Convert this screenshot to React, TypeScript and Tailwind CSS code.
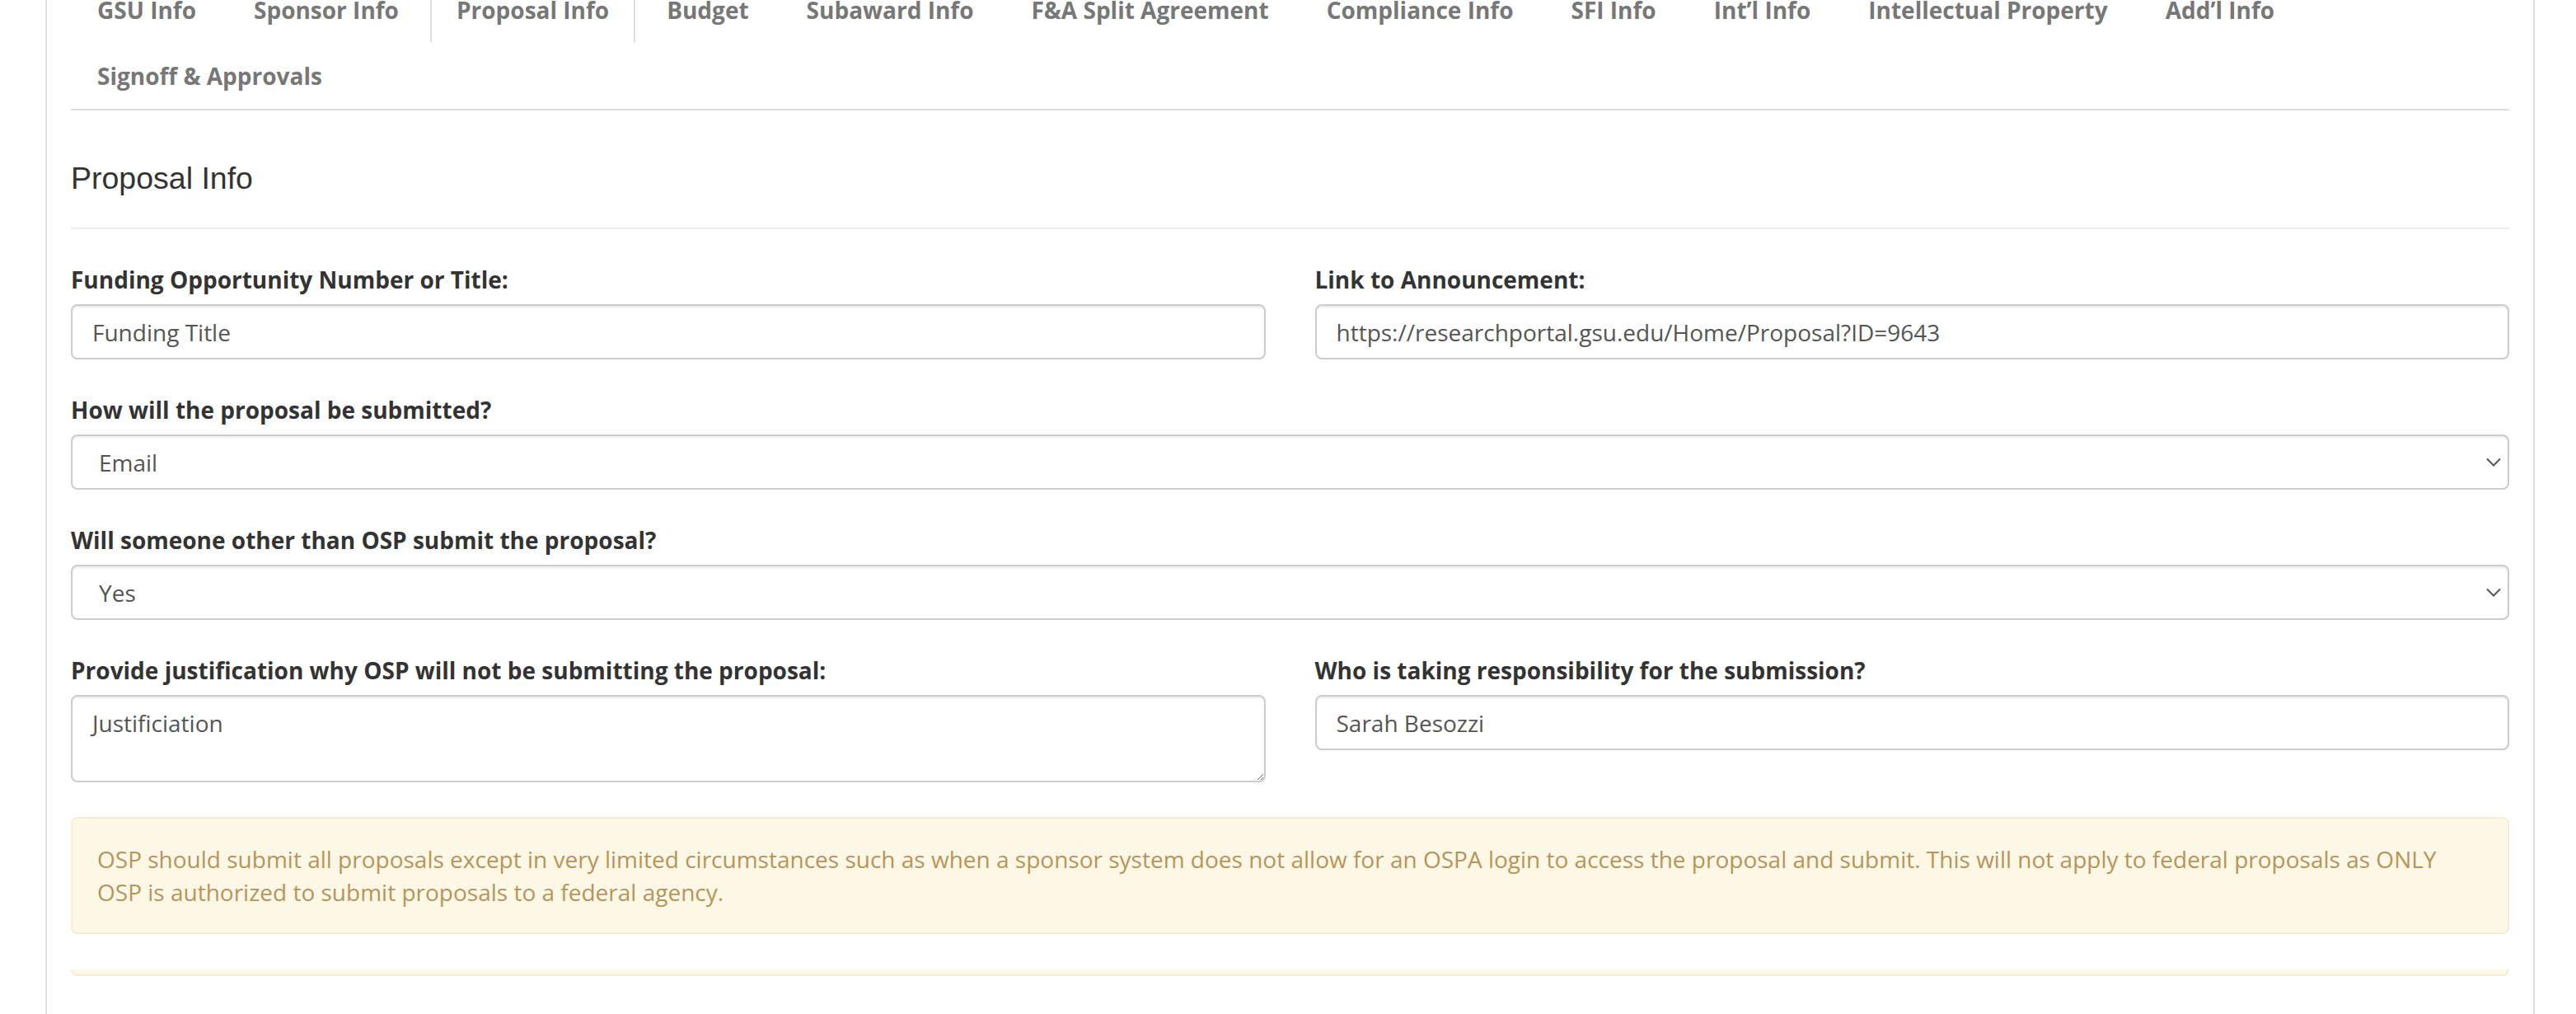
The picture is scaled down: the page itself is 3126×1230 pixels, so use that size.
import React from 'react';

const tabs = [
  'GSU Info',
  'Sponsor Info',
  'Proposal Info',
  'Budget',
  'Subaward Info',
  'F&A Split Agreement',
  'Compliance Info',
  'SFI Info',
  'Int’l Info',
  'Intellectual Property',
  'Add’l Info',
  'Signoff & Approvals',
];

const inputClass =
  'block w-full h-[67px] border-2 border-[#ccc] rounded-[8px] px-[24px] text-[28px] leading-[40px] text-[#555] bg-white shadow-[inset_0_2px_2px_rgba(0,0,0,0.075)] outline-none';

const Label: React.FC<{ children: React.ReactNode }> = ({ children }) => (
  <label className="block text-[28px] leading-[40px] font-bold text-[#333] mb-[10px]">{children}</label>
);

const Select: React.FC<{ value: string; options: string[] }> = ({ value, options }) => (
  <div className="relative">
    <select
      defaultValue={value}
      className="block w-full h-[67px] appearance-none border-2 border-[#ccc] rounded-[8px] pl-[32px] pr-[60px] text-[28px] text-[#555] bg-white shadow-[inset_0_2px_2px_rgba(0,0,0,0.075)] outline-none"
    >
      {options.map((o) => (
        <option key={o}>{o}</option>
      ))}
    </select>
    <svg
      className="absolute right-[10px] top-[28px] w-[18px] h-[11px] pointer-events-none"
      viewBox="0 0 18 11"
      fill="none"
    >
      <path d="M1 1.5 L9 9.5 L17 1.5" stroke="#555" strokeWidth="2" />
    </svg>
  </div>
);

export default function App() {
  return (
    <div className="h-[1230px] overflow-hidden bg-white font-['Open_Sans',sans-serif]">
      <div className="flow-root ml-[55px] w-[3021px] h-full border-x-2 border-[#ddd] px-[29px]">
        {/* tabs */}
        <ul className="-mt-[28px] flex flex-wrap border-b-2 border-[#ddd]">
          {tabs.map((t) => {
            const active = t === 'Proposal Info';
            return (
              <li key={t} className="mr-[6px]">
                <a
                  className={
                    active
                      ? 'block px-[30px] py-[18px] leading-[40px] text-[28px] font-bold text-[#777] border-2 border-[#ddd] border-b-transparent bg-white'
                      : 'block px-[30px] py-[18px] leading-[40px] text-[28px] font-bold text-[#777] border-2 border-transparent'
                  }
                >
                  {t}
                </a>
              </li>
            );
          })}
        </ul>

        {/* heading */}
        <div className="mt-[60px] pb-[38px] border-b-2 border-[#eee]">
          <h4 className="font-['Liberation_Sans',Arial,sans-serif] text-[37.5px] leading-[44px] text-[#333]">
            Proposal Info
          </h4>
        </div>

        <div className="mt-[41px]">
          <div className="grid grid-cols-2 gap-x-[60px] mb-[41px]">
            <div>
              <Label>Funding Opportunity Number or Title:</Label>
              <input className={inputClass} defaultValue="Funding Title" />
            </div>
            <div>
              <Label>Link to Announcement:</Label>
              <input className={inputClass} defaultValue="https://researchportal.gsu.edu/Home/Proposal?ID=9643" />
            </div>
          </div>

          <div className="mb-[41px]">
            <Label>How will the proposal be submitted?</Label>
            <Select value="Email" options={['Email', 'Sponsor Portal', 'Grants.gov']} />
          </div>

          <div className="mb-[41px]">
            <Label>Will someone other than OSP submit the proposal?</Label>
            <Select value="Yes" options={['Yes', 'No']} />
          </div>

          <div className="grid grid-cols-2 gap-x-[60px] mb-[42px]">
            <div>
              <Label>Provide justification why OSP will not be submitting the proposal:</Label>
              <textarea
                defaultValue="Justificiation"
                className="block w-full h-[106px] border-2 border-[#ccc] rounded-[8px] px-[24px] py-[12px] text-[28px] leading-[40px] text-[#555] bg-white shadow-[inset_0_2px_2px_rgba(0,0,0,0.075)] outline-none"
              />
            </div>
            <div>
              <Label>Who is taking responsibility for the submission?</Label>
              <input className={inputClass} defaultValue="Sarah Besozzi" />
            </div>
          </div>

          <div className="border-2 border-[#f8ecd2] bg-[#fcf8e5] rounded-[8px] px-[30px] py-[29px] text-[28px] leading-[40px] text-[#b8945b]">
            OSP should submit all proposals except in very limited circumstances such as when a sponsor system does not
            allow for an OSPA login to access the proposal and submit. This will not apply to federal proposals as ONLY
            OSP is authorized to submit proposals to a federal agency.
          </div>

          <div className="mt-[43px] h-[8px] border-2 border-t-0 border-[#f8ecd2] bg-[#fcf8e5] rounded-b-[8px]" />
        </div>
      </div>
    </div>
  );
}
